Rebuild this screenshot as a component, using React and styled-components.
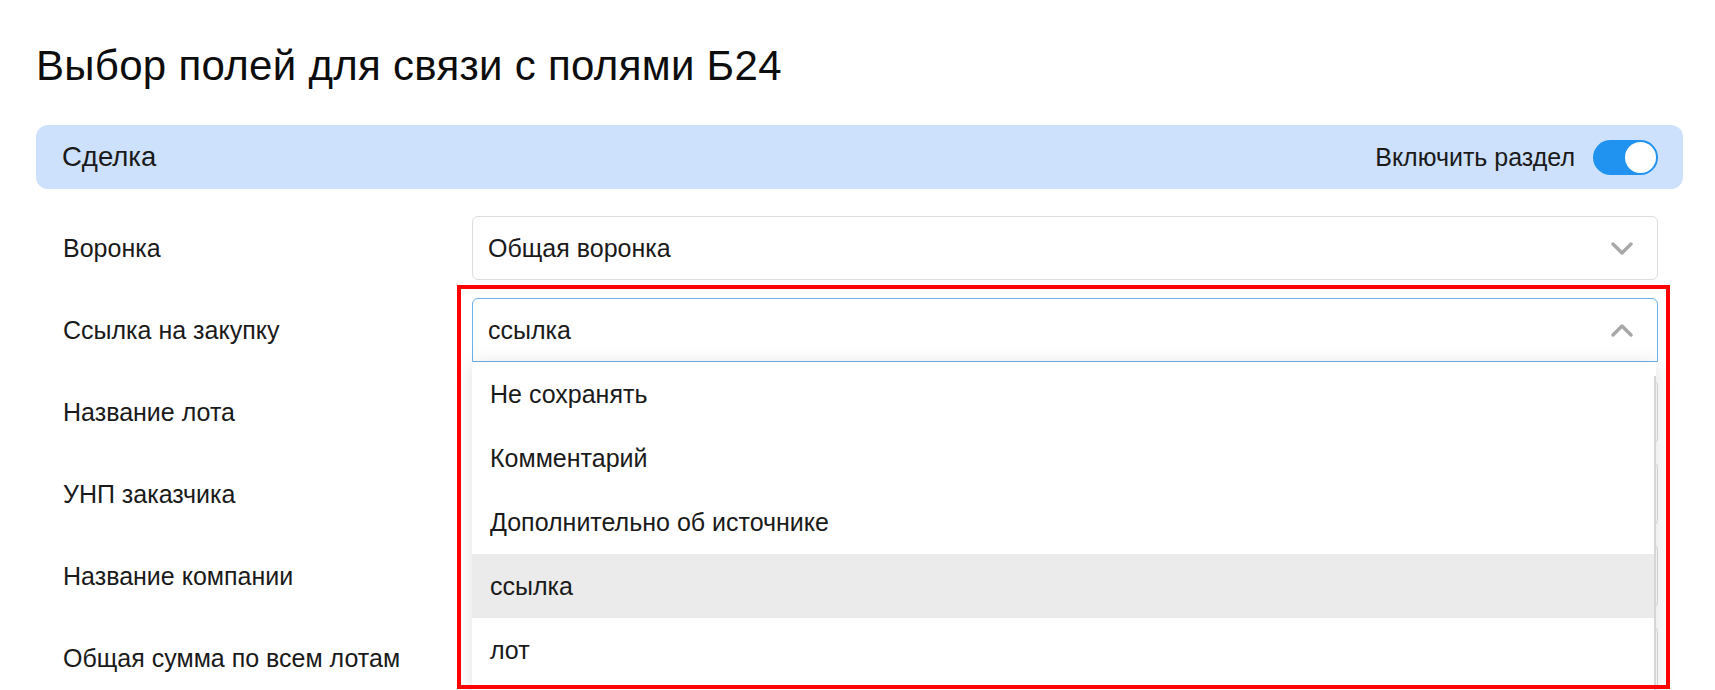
import React from "react";
import styled, { createGlobalStyle } from "styled-components";

const GlobalStyle = createGlobalStyle`
  html, body {
    margin: 0;
    padding: 0;
    overflow: hidden;
    background: #fff;
  }
  body {
    font-family: "Liberation Sans", Arial, sans-serif;
    color: #1a1a1a;
  }
`;

const fields = [
  { label: "Воронка", value: "Общая воронка" },
  { label: "Ссылка на закупку", value: "ссылка", open: true },
  { label: "Название лота", value: "" },
  { label: "УНП заказчика", value: "" },
  { label: "Название компании", value: "" },
  { label: "Общая сумма по всем лотам", value: "" },
];

const options = [
  "Не сохранять",
  "Комментарий",
  "Дополнительно об источнике",
  "ссылка",
  "лот",
];

const Chevron = ({ up }) => (
  <svg width="22" height="13" viewBox="0 0 22 13" fill="none">
    <polyline
      points={up ? "2,11 11,2 20,11" : "2,2 11,11 20,2"}
      stroke="#a8a8a8"
      strokeWidth="3.4"
      strokeLinecap="round"
      strokeLinejoin="round"
    />
  </svg>
);

const App = () => {
  return (
    <Page>
      <GlobalStyle />
      <Title>Выбор полей для связи с полями Б24</Title>
      <SectionHeader>
        <SectionName>Сделка</SectionName>
        <ToggleWrap>
          <ToggleLabel>Включить раздел</ToggleLabel>
          <Switch>
            <Knob />
          </Switch>
        </ToggleWrap>
      </SectionHeader>
      <Rows>
        {fields.map((f) => (
          <Row key={f.label}>
            <Label>{f.label}</Label>
            <Field $open={f.open}>
              <span>{f.value}</span>
              <Chevron up={f.open} />
              {f.open && (
                <>
                  <Menu>
                    {options.map((o) => (
                      <Option key={o} $active={o === f.value}>
                        {o}
                      </Option>
                    ))}
                    <ScrollLine />
                  </Menu>
                  <Highlight />
                </>
              )}
            </Field>
          </Row>
        ))}
      </Rows>
    </Page>
  );
};

export default App;

const Page = styled.div`
  padding: 42px 32px 0 36px;
  height: 690px;
  box-sizing: border-box;
`;

const Title = styled.h1`
  margin: 0 0 35px 0;
  font-size: 42px;
  line-height: 48px;
  letter-spacing: 0.3px;
  font-weight: 400;
  color: #0d0d0d;
`;

const SectionHeader = styled.div`
  display: flex;
  align-items: center;
  justify-content: space-between;
  height: 64px;
  padding: 0 25px 0 26px;
  background-color: #cde1fd;
  border-radius: 12px;
`;

const SectionName = styled.div`
  font-size: 27.5px;
  color: #1a1a1a;
`;

const ToggleWrap = styled.div`
  display: flex;
  align-items: center;
  gap: 18px;
`;

const ToggleLabel = styled.span`
  font-size: 25px;
  color: #1a1a1a;
`;

const Switch = styled.div`
  display: flex;
  justify-content: flex-end;
  align-items: center;
  width: 65px;
  height: 35px;
  padding: 2px;
  box-sizing: border-box;
  border-radius: 18px;
  background-color: #2093f0;
`;

const Knob = styled.div`
  width: 31px;
  height: 31px;
  border-radius: 50%;
  background-color: #fff;
`;

const Rows = styled.div`
  display: flex;
  flex-direction: column;
  gap: 18px;
  margin-top: 27px;
  padding: 0 25px 0 27px;
`;

const Row = styled.div`
  display: grid;
  grid-template-columns: 409px 1fr;
  align-items: center;
  height: 64px;
`;

const Label = styled.div`
  font-size: 25px;
  color: #1a1a1a;
`;

const Field = styled.div`
  position: relative;
  display: flex;
  align-items: center;
  justify-content: space-between;
  height: 64px;
  padding: 0 24px 0 15px;
  box-sizing: border-box;
  font-size: 25px;
  color: #1a1a1a;
  background: #fff;
  border: 1px solid ${(p) => (p.$open ? "#6cb0ea" : "#dddddd")};
  border-radius: ${(p) => (p.$open ? "6px 6px 0 0" : "6px")};
  z-index: ${(p) => (p.$open ? 2 : 1)};
`;

const Menu = styled.div`
  position: absolute;
  top: calc(100% + 1px);
  left: -1px;
  right: 1px;
  padding-bottom: 10px;
  background: #fff;
  box-shadow: 0 2px 18px rgba(0, 0, 0, 0.13);
`;

const Option = styled.div`
  display: flex;
  align-items: center;
  height: 64px;
  padding-left: 18px;
  font-size: 25px;
  color: #1a1a1a;
  background-color: ${(p) => (p.$active ? "#ebebeb" : "#fff")};
`;

const ScrollLine = styled.div`
  position: absolute;
  top: 14px;
  right: 0;
  bottom: 0;
  width: 2px;
  background: #d6d6d6;
`;

const Highlight = styled.div`
  position: absolute;
  left: -16px;
  top: -14px;
  right: -13px;
  height: 404px;
  border: 4px solid #ff0000;
  box-sizing: border-box;
  pointer-events: none;
  z-index: 3;
`;
